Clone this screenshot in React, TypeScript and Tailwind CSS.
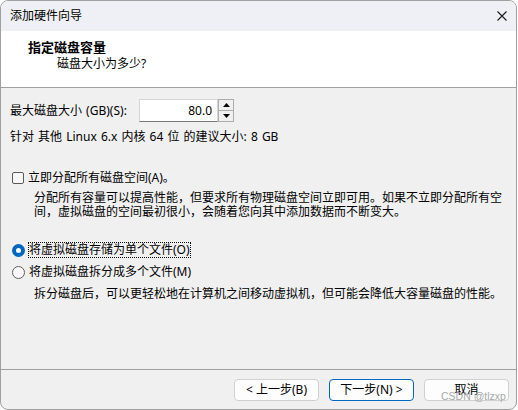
import React from "react";

const font = {
  fontFamily: '"Noto Sans", "Noto Sans CJK SC", sans-serif',
};

function Checkbox() {
  return <span className="inline-block w-[12px] h-[12px] rounded-[2px] border border-[#5a5a5a] bg-[#f7f7f7]" />;
}

function Radio({ checked }: { checked?: boolean }) {
  if (checked) {
    return (
      <span className="inline-flex w-[13px] h-[13px] rounded-full bg-[#0067c0] items-center justify-center">
        <span className="w-[5px] h-[5px] rounded-full bg-white" />
      </span>
    );
  }
  return <span className="inline-block w-[13px] h-[13px] rounded-full border border-[#5f5f5f] bg-[#f7f7f7]" />;
}

function Button({ label, primary }: { label: string; primary?: boolean }) {
  return (
    <button
      className={
        "w-[85px] h-[22px] rounded-[4px] bg-[#fdfdfd] text-[12px] text-black flex items-center justify-center border " +
        (primary ? "border-[#0067c0]" : "border-[#d0d0d0]")
      }
    >
      {label}
    </button>
  );
}

export default function App() {
  return (
    <div className="w-[518px] h-[410px] bg-white" style={font}>
      <div className="relative w-[517px] h-[410px] border border-[#a0a0a0] rounded-lg overflow-hidden flex flex-col bg-[#f0f0f0] text-[12px] text-black">
        {/* Title bar */}
        <div className="h-[30px] shrink-0 bg-[#eff0f5] flex items-center justify-between pl-[9px] pr-[8px]">
          <span className="leading-none">添加硬件向导</span>
          <svg width="12" height="12" viewBox="0 0 12 12">
            <path d="M1.5 1.5L10.5 10.5M10.5 1.5L1.5 10.5" stroke="#1a1a1a" strokeWidth="1.1" />
          </svg>
        </div>

        {/* Header */}
        <div className="h-[57px] shrink-0 bg-white border-b border-[#a0a0a0] pl-[27px] pt-[7px]">
          <div className="text-[13px] font-bold leading-[18px]">指定磁盘容量</div>
          <div className="pl-[29px] leading-[16px]">磁盘大小为多少?</div>
        </div>

        {/* Body */}
        <div className="flex-1 pl-[9px] pt-[11px]">
          <div className="flex items-center h-[23px]">
            <span className="w-[129px] [word-spacing:1px]">最大磁盘大小 (GB)(S):</span>
            <div className="flex h-[23px]">
              <div className="w-[79px] h-[23px] bg-white border border-[#d6d6d6] border-b-[#7a7a7a] flex items-center justify-end pr-[5px]">
                80.0
              </div>
              <div className="w-[16px] h-[23px] flex flex-col border border-[#adadad] bg-[#f0f0f0]">
                <div className="flex-1 flex items-center justify-center border-b border-[#adadad]">
                  <svg width="7" height="4" viewBox="0 0 7 4">
                    <path d="M0 4L3.5 0L7 4Z" fill="#000" />
                  </svg>
                </div>
                <div className="flex-1 flex items-center justify-center">
                  <svg width="7" height="4" viewBox="0 0 7 4">
                    <path d="M0 0L3.5 4L7 0Z" fill="#000" />
                  </svg>
                </div>
              </div>
            </div>
          </div>
          <div className="mt-[7px] leading-[16px] [word-spacing:1px]">针对 其他 Linux 6.x 内核 64 位 的建议大小: 8 GB</div>

          <div className="mt-[25px] flex items-center h-[16px] pl-[2px] gap-[4px]">
            <Checkbox />
            <span>立即分配所有磁盘空间(A)。</span>
          </div>
          <div className="mt-[5px] pl-[24px] pr-[12px] leading-[14px]">
            分配所有容量可以提高性能，但要求所有物理磁盘空间立即可用。如果不立即分配所有空间，虚拟磁盘的空间最初很小，会随着您向其中添加数据而不断变大。
          </div>

          <div className="mt-[23px] flex items-center h-[16px] pl-[2px] gap-[3px]">
            <Radio checked />
            <span className="border border-dotted border-black leading-[14px]">将虚拟磁盘存储为单个文件(O)</span>
          </div>
          <div className="mt-[6px] flex items-center h-[16px] pl-[2px] gap-[4px]">
            <Radio />
            <span>将虚拟磁盘拆分成多个文件(M)</span>
          </div>
          <div className="mt-[6px] pl-[24px] leading-[16px]">
            拆分磁盘后，可以更轻松地在计算机之间移动虚拟机，但可能会降低大容量磁盘的性能。
          </div>
        </div>

        {/* Footer */}
        <div className="h-[40px] shrink-0 border-t border-[#a0a0a0] flex justify-end gap-[10px] pt-[9px] pr-[7px]">
          <Button label="< 上一步(B)" />
          <Button label="下一步(N) >" primary />
          <Button label="取消" />
        </div>

        {/* Watermark */}
        <div
          className="absolute left-[440px] top-[390px] whitespace-nowrap text-[10.5px] leading-none text-[#a0a0a0] opacity-90 pointer-events-none"
          style={{ fontFamily: '"Liberation Sans", Arial, sans-serif' }}
        >
          CSDN @tlzxp
        </div>
      </div>
    </div>
  );
}
